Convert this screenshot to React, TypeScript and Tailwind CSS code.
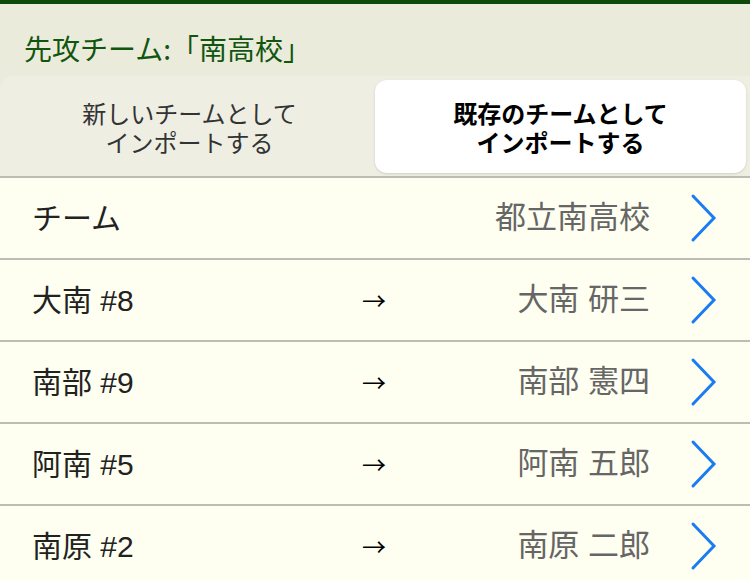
import { useState } from "react";

const rows = [
  { left: "大南 #8", right: "大南 研三" },
  { left: "南部 #9", right: "南部 憲四" },
  { left: "阿南 #5", right: "阿南 五郎" },
  { left: "南原 #2", right: "南原 二郎" },
];

const cjk = { fontFamily: '"Noto Sans CJK JP", sans-serif' };

const Chevron = () => (
  <svg width="30" height="50" viewBox="0 0 30 50" className="shrink-0">
    <path
      d="M5 3 L26 25 L5 47"
      fill="none"
      stroke="#1a7cf5"
      strokeWidth="3"
      strokeLinecap="round"
      strokeLinejoin="miter"
    />
  </svg>
);

const Row = ({ left, right, arrow }: { left: string; right: string; arrow?: boolean }) => (
  <div className="h-[82px] flex items-center pl-8 pr-[32px] border-b-2 border-[#bdbdb5] bg-[#fefff0]">
    <div className="w-[330px] text-[30px] text-[#222]">{left}</div>
    <div className="w-[40px] text-[24px] text-black" style={cjk}>
      {arrow ? "→" : ""}
    </div>
    <div className="flex-1 text-right text-[31px] text-[#666] pr-[38px]">{right}</div>
    <Chevron />
  </div>
);

export default function App() {
  const [mode, setMode] = useState(1);
  const tabs = ["新しいチームとして\nインポートする", "既存のチームとして\nインポートする"];

  return (
    <div
      className="w-[750px] h-[580px] overflow-hidden bg-[#fefff0]"
      style={{ fontFamily: '"Liberation Sans", "Noto Sans CJK JP", sans-serif' }}
    >
      <div className="h-[4px] bg-[#0b4a0b]" />
      <div className="bg-[#ebebdc]">
        <div
          className="h-[72px] flex items-center pl-6 pt-4 text-[28px] text-[#11550f]"
          style={cjk}
        >
          先攻チーム:「南高校」
        </div>
        <div className="flex h-[102px] bg-[#eeeee3] rounded-tl-[14px] px-1 pt-1 pb-[3px] border-b-2 border-[#bdbdb5]">
          {tabs.map((t, i) => (
            <button
              key={i}
              onClick={() => setMode(i)}
              className={`flex-1 flex items-center justify-center whitespace-pre-line text-[24px] leading-[29px] text-center pt-1 ${
                mode === i
                  ? "bg-white rounded-[12px] font-bold text-black shadow-sm"
                  : "text-[#333]"
              }`}
            >
              {t}
            </button>
          ))}
        </div>
      </div>
      <Row left="チーム" right="都立南高校" />
      {rows.map((r) => (
        <Row key={r.left} left={r.left} right={r.right} arrow />
      ))}
    </div>
  );
}
